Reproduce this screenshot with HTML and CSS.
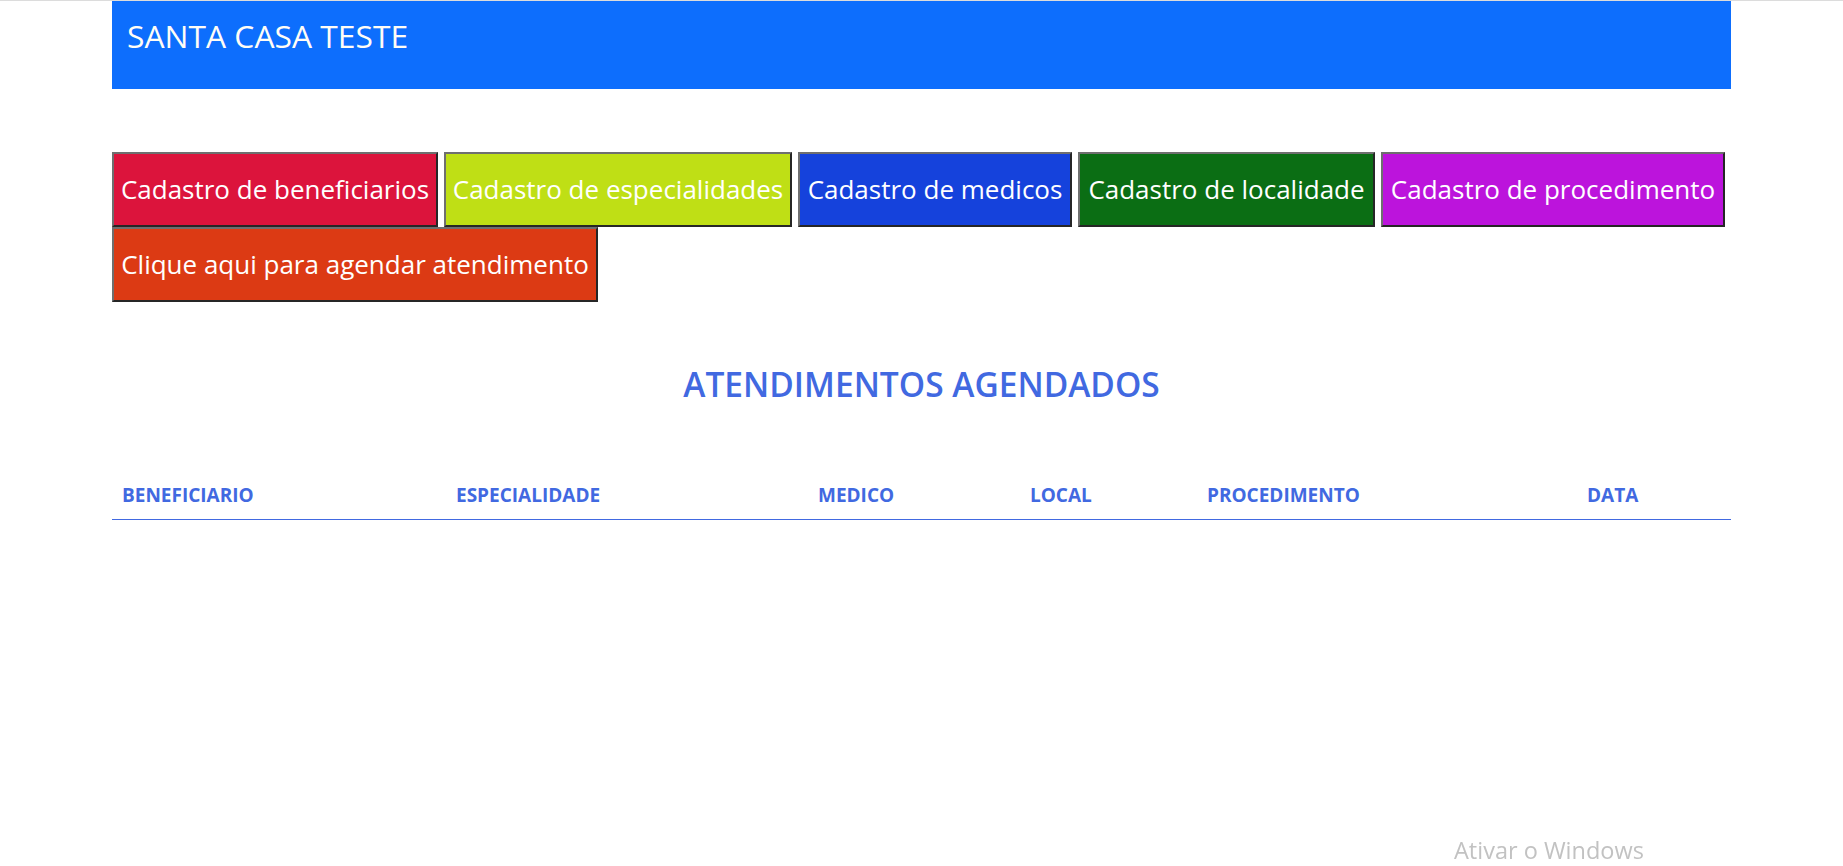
FILE: index.html
```html
<!DOCTYPE html>
<html lang="pt-BR">
<head>
<meta charset="utf-8">
<title>Santa Casa Teste</title>
<link rel="stylesheet" href="styles.css">
</head>
<body>
<div class="container">
  <header class="topbar">
    <h1 class="brand">SANTA CASA TESTE</h1>
  </header>

  <nav class="actions">
    <button class="btn btn-benef">Cadastro de beneficiarios</button>
    <button class="btn btn-espec">Cadastro de especialidades</button>
    <button class="btn btn-medic">Cadastro de medicos</button>
    <button class="btn btn-local">Cadastro de localidade</button>
    <button class="btn btn-proc">Cadastro de procedimento</button>
    <button class="btn btn-agenda">Clique aqui para agendar atendimento</button>
  </nav>

  <h2 class="section-title">ATENDIMENTOS AGENDADOS</h2>

  <table class="grid">
    <colgroup>
      <col class="c1"><col class="c2"><col class="c3"><col class="c4"><col class="c5"><col class="c6">
    </colgroup>
    <thead>
      <tr>
        <th>BENEFICIARIO</th>
        <th>ESPECIALIDADE</th>
        <th>MEDICO</th>
        <th>LOCAL</th>
        <th>PROCEDIMENTO</th>
        <th>DATA</th>
      </tr>
    </thead>
    <tbody></tbody>
  </table>
</div>
<div class="watermark">Ativar o Windows</div>
</body>
</html>
```

FILE: styles.css
```css
html, body {
  margin: 0;
  padding: 0;
  background: #ffffff;
}
body {
  border-top: 1px solid #dcdcdc;
  font-family: "Open Sans", "Noto Sans", sans-serif;
  color: #212529;
}
.container {
  width: 1619px;
  margin: 0 auto;
}
.topbar {
  background: #0d6efd;
  height: 88px;
  box-sizing: border-box;
  padding: 15px 15px 0;
}
.brand {
  margin: 0;
  font-size: 31.8px;
  line-height: 40px;
  font-weight: 400;
  color: #fffdf6;
}
.actions {
  display: flex;
  flex-wrap: wrap;
  column-gap: 6px;
  row-gap: 0;
  margin-top: 63px;
}
.btn {
  height: 75px;
  box-sizing: border-box;
  border-width: 2px;
  border-style: solid;
  border-color: #6f6f6f #262626 #262626 #6f6f6f;
  padding: 0;
  font-family: "Open Sans", "Noto Sans", sans-serif;
  font-size: 26px;
  line-height: 71px;
  color: #ffffff;
  text-align: center;
  white-space: nowrap;
  cursor: pointer;
}
.btn-benef { width: 326px; background: #dc143c; }
.btn-espec { width: 348px; background: #bfdf15; }
.btn-medic { width: 274px; background: #1542dc; }
.btn-local { width: 297px; background: #0b6e14; }
.btn-proc { width: 344px; background: #bc14dc; }
.btn-agenda { width: 486px; background: #dc3a14; }

.section-title {
  margin: 62px 0 0;
  text-align: center;
  font-size: 33.5px;
  line-height: 41px;
  font-weight: 600;
  color: #4169e1;
}
.grid {
  width: 100%;
  margin-top: 68px;
  border-collapse: collapse;
  table-layout: fixed;
}
.c1 { width: 334px; }
.c2 { width: 362px; }
.c3 { width: 212px; }
.c4 { width: 177px; }
.c5 { width: 380px; }
.c6 { width: 154px; }
.grid th {
  text-align: left;
  padding: 10px 10px 12px;
  font-size: 19px;
  line-height: 24px;
  font-weight: 700;
  color: #4169e1;
  border-bottom: 1px solid #4169e1;
}
.watermark {
  position: fixed;
  left: 1454px;
  top: 835px;
  font-size: 23.5px;
  line-height: 30px;
  color: #c2c2c2;
  pointer-events: none;
}
```
